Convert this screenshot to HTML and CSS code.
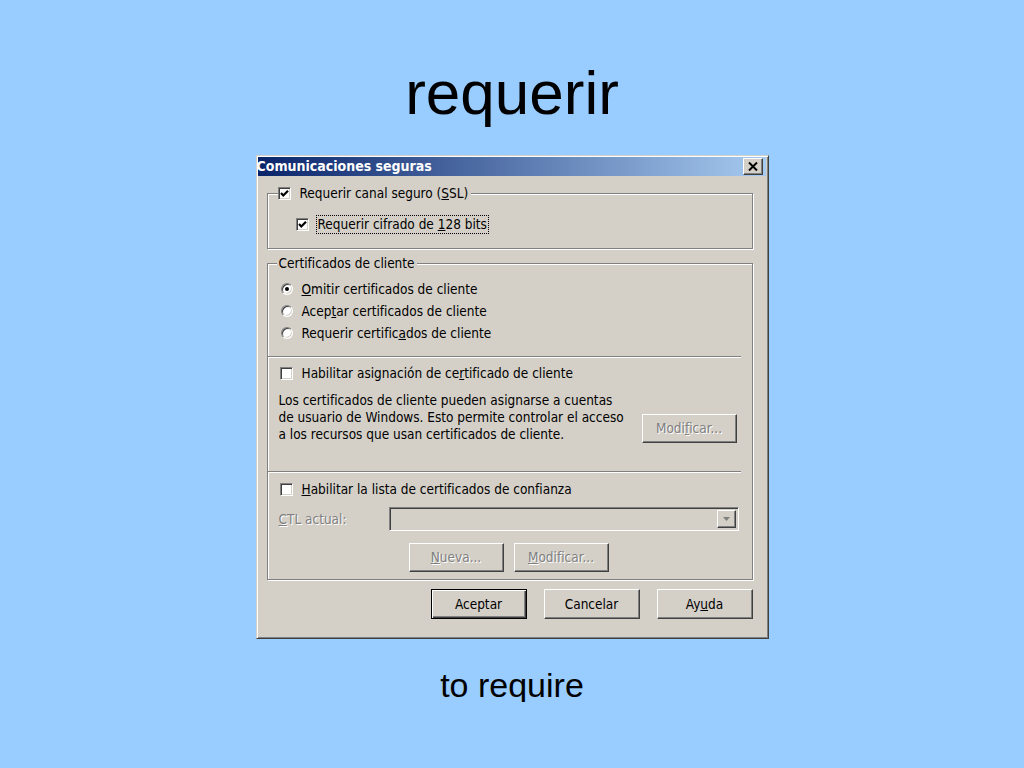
FILE: index.html
```html
<!DOCTYPE html>
<html lang="es">
<head>
    <meta charset="UTF-8">
    <title>requerir</title>
    <link rel="stylesheet" href="styles.css">
</head>
<body>
    <h1 class="slide-title">requerir</h1>

    <div class="dialog">
        <div class="titlebar">
            <span class="title-text">Comunicaciones seguras</span>
            <span class="close">
                <svg width="10" height="9" viewBox="0 0 10 9"><path d="M1 0.5 L9 8.5 M9 0.5 L1 8.5" stroke="#000" stroke-width="2" fill="none"/></svg>
            </span>
        </div>

        <div class="dialog-body">
            <fieldset class="group group-ssl">
                <legend>
                    <span class="check on"><svg width="9" height="9" viewBox="0 0 9 9"><polyline points="1,4 3.3,6.5 8,1.8" stroke="#000" stroke-width="2.2" fill="none"/></svg></span>
                    <span>Requerir canal seguro (<u>S</u>SL)</span>
                </legend>
                <div class="row sub">
                    <span class="check on"><svg width="9" height="9" viewBox="0 0 9 9"><polyline points="1,4 3.3,6.5 8,1.8" stroke="#000" stroke-width="2.2" fill="none"/></svg></span>
                    <span class="focus">Requerir cifrado de <u>1</u>28 bits</span>
                </div>
            </fieldset>

            <fieldset class="group group-cert">
                <legend>Certificados de cliente</legend>

                <div class="radios">
                    <div class="row"><span class="radio on"></span><span><u>O</u>mitir certificados de cliente</span></div>
                    <div class="row"><span class="radio"></span><span>Acep<u>t</u>ar certificados de cliente</span></div>
                    <div class="row"><span class="radio"></span><span>Requerir certific<u>a</u>dos de cliente</span></div>
                </div>

                <div class="sep"></div>

                <div class="row check-row"><span class="check"></span><span>Habilitar asignación de ce<u>r</u>tificado de cliente</span></div>

                <div class="mapping">
                    <p>Los certificados de cliente pueden asignarse a cuentas<br>de usuario de Windows. Esto permite controlar el acceso<br>a los recursos que usan certificados de cliente.</p>
                    <button class="btn" disabled>Modi<u>f</u>icar...</button>
                </div>

                <div class="sep sep-low"></div>

                <div class="row check-row ctl-check"><span class="check"></span><span><u>H</u>abilitar la lista de certificados de confianza</span></div>

                <div class="ctl-row">
                    <span class="disabled-text"><u>C</u>TL actual:</span>
                    <div class="combo">
                        <span class="combo-btn"><svg width="7" height="4" viewBox="0 0 7 4"><path d="M0 0 H7 L3.5 4 Z" fill="#808080"/></svg></span>
                    </div>
                </div>

                <div class="ctl-buttons">
                    <button class="btn" disabled><u>N</u>ueva...</button>
                    <button class="btn" disabled><u>M</u>odificar...</button>
                </div>
            </fieldset>

            <div class="dialog-buttons">
                <button class="btn big default">Aceptar</button>
                <button class="btn big">Cancelar</button>
                <button class="btn big">Ay<u>u</u>da</button>
            </div>
        </div>
    </div>

    <p class="translation">to require</p>
</body>
</html>
```

FILE: styles.css
```css
* { box-sizing: border-box; }
body { margin: 0; background: #99ccff; font-family: "Liberation Sans", Arial, sans-serif; color: #000; }

.slide-title {
    margin: 63px 0 0;
    font-size: 62px;
    line-height: 60px;
    font-weight: normal;
    text-align: center;
}
.translation {
    margin: 29px 0 0;
    font-size: 34px;
    line-height: 34px;
    text-align: center;
}

.dialog {
    width: 513px;
    height: 484px;
    margin: 32px auto 0;
    padding: 1px 2px 2px 1px;
    background: #d4d0c8;
    border: 1px solid;
    border-color: #d4d0c8 #404040 #404040 #d4d0c8;
    box-shadow: inset 1px 1px #fff, inset -1px -1px #808080;
    font: 13.5px "DejaVu Sans Condensed", "DejaVu Sans", sans-serif;
    line-height: 15px;
}
.titlebar {
    height: 19px;
    display: flex;
    align-items: center;
    justify-content: space-between;
    padding: 0 3px 0 0;
    background: linear-gradient(to right, #0a246a, #a6caf0);
    color: #fff;
    font-weight: bold;
    font-size: 14px;
}
.title-text { margin-left: -1px; }
.close {
    width: 20px;
    height: 17px;
    display: flex;
    align-items: center;
    justify-content: center;
    background: #d4d0c8;
    border: 1px solid;
    border-color: #fff #404040 #404040 #fff;
    box-shadow: inset -1px -1px #808080;
}

.dialog-body { padding: 10px 13px 0 9px; }

/* etched group boxes */
.group {
    margin: 0;
    padding: 0 12px 0 11px;
    border: 1px solid #808080;
    box-shadow: 1px 1px #fff, inset 1px 1px #fff;
    min-width: 0;
}
.group legend {
    display: flex;
    align-items: center;
    height: 15px;
    background: #d4d0c8;
}
.group-ssl legend { margin-left: -1px; padding: 0 3px 0 0; gap: 9px; }
.group-ssl .sub { height: 19px; margin: 14px 0 14px 17px; }
.group-cert { margin-top: 7px; padding-bottom: 7px; }
.group-cert legend { margin-left: -2px; padding: 0 2px; }

.row { display: flex; align-items: center; gap: 9px; white-space: nowrap; }
.radios { padding-top: 7px; }
.radios .row { height: 22px; padding-left: 2px; }
.check-row { height: 22px; padding-left: 1px; margin-top: 4px; }
.ctl-check { margin-top: 5px; }

.focus {
    margin-left: -2px;
    padding: 0 1px;
    line-height: 17px;
    border: 1px dotted #000;
}

.check {
    flex: none;
    width: 13px;
    height: 13px;
    display: flex;
    align-items: center;
    justify-content: center;
    background: #fff;
    border: 1px solid;
    border-color: #808080 #fff #fff #808080;
    box-shadow: inset 1px 1px #404040, inset -1px -1px #d4d0c8;
}
.radio {
    flex: none;
    width: 12px;
    height: 12px;
    display: flex;
    align-items: center;
    justify-content: center;
    border-radius: 50%;
    background: #fff;
    border: 1px solid;
    border-color: #808080 #fff #fff #808080;
    box-shadow: inset 1px 1px #404040, inset -1px -1px #d4d0c8;
}
.radio.on::after {
    content: '';
    width: 4px;
    height: 4px;
    border-radius: 50%;
    background: #000;
}

.sep {
    width: 473px;
    height: 2px;
    margin: 12px 0 0 -11px;
    border-top: 1px solid #808080;
    border-bottom: 1px solid #fff;
}
.sep-low { margin-top: 28px; }

.mapping {
    display: flex;
    align-items: flex-end;
    justify-content: space-between;
    margin-top: 8px;
    padding-right: 3px;
}
.mapping p { margin: 0; line-height: 17px; white-space: nowrap; }

.ctl-row {
    display: flex;
    align-items: center;
    justify-content: space-between;
    margin: 7px 1px 0 0;
}
.disabled-text { color: #808080; text-shadow: 1px 1px #fff; }
.combo {
    width: 350px;
    height: 24px;
    display: flex;
    justify-content: flex-end;
    align-items: center;
    padding: 2px;
    background: #d4d0c8;
    border: 1px solid;
    border-color: #808080 #fff #fff #808080;
    box-shadow: inset 1px 1px #404040, inset -1px -1px #d4d0c8;
}
.combo-btn {
    width: 19px;
    height: 18px;
    display: flex;
    align-items: center;
    justify-content: center;
    border: 1px solid;
    border-color: #fff #404040 #404040 #fff;
    box-shadow: inset -1px -1px #808080;
}

.ctl-buttons { display: flex; gap: 10px; margin-top: 12px; padding-left: 130px; }

.btn {
    width: 95px;
    height: 29px;
    padding: 0;
    font: inherit;
    color: #000;
    background: #d4d0c8;
    border: 1px solid;
    border-color: #fff #404040 #404040 #fff;
    box-shadow: inset -1px -1px #808080;
}
.btn:disabled { color: #808080; text-shadow: 1px 1px #fff; }
.btn.big { width: 96px; height: 30px; }
.btn.default {
    border-color: #000;
    box-shadow: inset 1px 1px #fff, inset -1px -1px #404040, inset -2px -2px #808080;
}

.dialog-buttons { display: flex; justify-content: flex-end; gap: 17px; margin-top: 9px; }
```
